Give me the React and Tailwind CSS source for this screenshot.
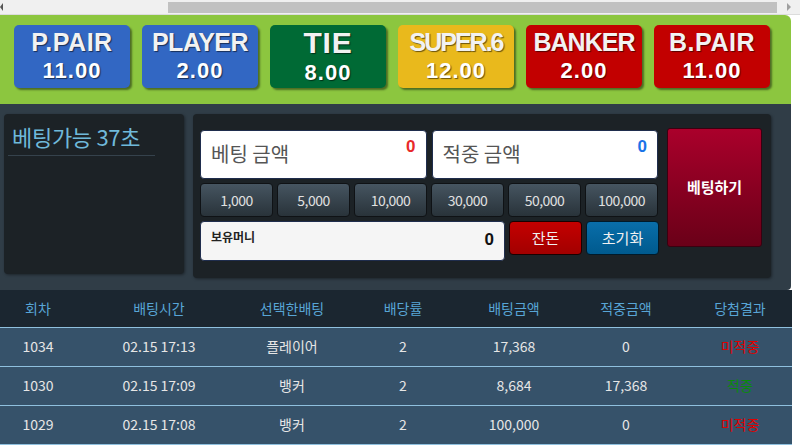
const odds = [
    { name: "P.PAIR", value: "11.00", bg: "bg-[#3267c3]", big: false, track: "tracking-[0.5px]" },
    { name: "PLAYER", value: "2.00", bg: "bg-[#3267c3]", big: false, track: "tracking-[-0.5px]" },
    { name: "TIE", value: "8.00", bg: "bg-[#006a35]", big: true, track: "tracking-wide" },
    { name: "SUPER.6", value: "12.00", bg: "bg-[#e9b91c]", big: false, track: "tracking-[-2px]" },
    { name: "BANKER", value: "2.00", bg: "bg-[#c20000]", big: false, track: "tracking-[-1px]" },
    { name: "B.PAIR", value: "11.00", bg: "bg-[#c20000]", big: false, track: "tracking-[0.5px]" },
];

const chips = ["1,000", "5,000", "10,000", "30,000", "50,000", "100,000"];

const history = [
    { round: "1034", time: "02.15 17:13", pick: "플레이어", rate: "2", bet: "17,368", win: "0", result: "미적중" },
    { round: "1030", time: "02.15 17:09", pick: "뱅커", rate: "2", bet: "8,684", win: "17,368", result: "적중" },
    { round: "1029", time: "02.15 17:08", pick: "뱅커", rate: "2", bet: "100,000", win: "0", result: "미적중" },
];

const kr = "font-['Noto_Sans_CJK_KR','Noto_Sans',sans-serif]";

function OddsButton({ item }) {

    return (

        <div className={`
            ${item.bg}
            w-[116px]
            h-[63px]
            rounded-[5px]
            flex
            flex-col
            items-center
            text-white
            font-bold
            font-['Liberation_Sans',Arial,sans-serif]
            shadow-[2px_2px_2px_rgba(0,0,0,0.45)]
            [text-shadow:1px_1px_1px_rgba(0,0,0,0.55)]
        `}>

            <div className={
                item.big
                    ? `text-[30px] leading-[30px] mt-[3px] text-[#f2f2f2] ${item.track}`
                    : `text-[25px] leading-[28px] mt-[3px] text-[#f2f2f2] ${item.track}`
            }>

                {item.name}

            </div>

            <div className="text-[22px] leading-[26px] mt-[2px] tracking-[1px]">

                {item.value}

            </div>

        </div>

    );

}

function AmountBox({ label, color }) {

    return (

        <div className="
            flex-1
            h-[49px]
            bg-white
            rounded-[4px]
            border
            border-[#1f2d4d]
            flex
            justify-between
            items-start
            px-[10px]
        ">

            <span className="text-[20px] leading-[28px] pt-[9px] text-[#555]">

                {label}

            </span>

            <span className={`text-[17px] leading-[20px] pt-[6px] font-bold ${color} font-['Liberation_Sans',sans-serif]`}>

                0

            </span>

        </div>

    );

}

export default function App() {

    return (

        <div className={`w-[800px] h-[448px] overflow-hidden bg-white ${kr}`}>

            {/* fake horizontal scrollbar */}
            <div className="h-[15px] bg-[#f0f0f0] border-b border-[#dcdcdc] flex items-center">

                <div className="w-[168px] h-full flex items-center">

                    <div className="w-0 h-0 border-y-[4px] border-y-transparent border-r-[3px] border-r-[#555]" />

                </div>

                <div className="w-[609px] h-[11px] bg-[#c1c1c1]" />

                <div className="flex-1 flex justify-center">

                    <div className="w-0 h-0 border-y-[4px] border-y-transparent border-l-[4px] border-l-[#a0a0a0]" />

                </div>

            </div>

            <div className="w-[791px]">

                <div className="
                    bg-[#8cc63f]
                    h-[89px]
                    rounded-tr-[6px]
                    flex
                    gap-[12px]
                    pl-[14px]
                    pt-[10px]
                ">

                    {odds.map((item) => (

                        <OddsButton key={item.name} item={item} />

                    ))}

                </div>

                <div className="bg-[#303d47] h-[186px] rounded-br-[4px] flex items-start pt-[10px] pl-[4px] gap-[9px]">

                    <div className="w-[180px] h-[160px] bg-[#1c2226] rounded-[4px] px-[4px] shadow-[1px_1px_3px_rgba(0,0,0,0.4)]">

                        <div className="text-[22px] leading-[30px] pt-[7px] pl-[4px] text-[#6fb9da] w-[147px] border-b border-[#35424c] pb-[4px] tracking-[-0.3px]">

                            베팅가능 37초

                        </div>

                    </div>

                    <div className="w-[578px] h-[164px] bg-[#1c2226] rounded-[4px] flex pl-[7px] pt-[16px] gap-[8px] shadow-[1px_1px_3px_rgba(0,0,0,0.4)]">

                        <div className="w-[459px] flex flex-col gap-[4px]">

                            <div className="flex gap-[5px] pr-[1px]">

                                <AmountBox label="베팅 금액" color="text-[#e82a2a]" />

                                <AmountBox label="적중 금액" color="text-[#1a73e8]" />

                            </div>

                            <div className="flex gap-[4px]">

                                {chips.map((chip) => (

                                    <button
                                        key={chip}
                                        className="
                                            w-[73px]
                                            h-[34px]
                                            rounded-[4px]
                                            border
                                            border-[#0f1215]
                                            bg-gradient-to-b
                                            from-[#465561]
                                            to-[#29333a]
                                            text-[14px]
                                            tracking-[-0.5px]
                                            text-[#e0e0e0]
                                        "
                                    >

                                        {chip}

                                    </button>

                                ))}

                            </div>

                            <div className="flex gap-[4px] items-start">

                                <div className="
                                    w-[305px]
                                    h-[40px]
                                    bg-[#f5f5f5]
                                    rounded-[4px]
                                    border
                                    border-[#1f2d4d]
                                    flex
                                    justify-between
                                    px-[10px]
                                ">

                                    <span className="text-[12px] font-bold leading-[16px] pt-[7px] text-[#222]">

                                        보유머니

                                    </span>

                                    <span className="text-[17px] font-bold leading-[20px] pt-[8px] text-[#111] font-['Liberation_Sans',sans-serif]">

                                        0

                                    </span>

                                </div>

                                <button className="w-[73px] h-[34px] rounded-[4px] border border-[#1a0000] bg-gradient-to-b from-[#c40000] to-[#a20000] text-[15px] text-[#f0f0f0]">

                                    잔돈

                                </button>

                                <button className="w-[73px] h-[34px] rounded-[4px] border border-[#001a2a] bg-gradient-to-b from-[#0a6eaa] to-[#005a8e] text-[15px] text-[#f0f0f0]">

                                    초기화

                                </button>

                            </div>

                        </div>

                        <button className="
                            w-[95px]
                            h-[119px]
                            -mt-[2px]
                            rounded-[3px]
                            border
                            border-[#3a0010]
                            bg-gradient-to-b
                            from-[#aa002b]
                            to-[#6a0018]
                            text-white
                            font-bold
                            text-[15px]
                        ">

                            베팅하기

                        </button>

                    </div>

                </div>

            </div>

            <table className="w-[792px] bg-[#36526a] text-[14px] text-center border-collapse table-fixed">

                <colgroup>

                    <col className="w-[76px]" />
                    <col className="w-[166px]" />
                    <col className="w-[100px]" />
                    <col className="w-[122px]" />
                    <col className="w-[100px]" />
                    <col className="w-[124px]" />
                    <col className="w-[104px]" />

                </colgroup>

                <thead>

                    <tr className="bg-[#1b2630] h-[37px] border-b border-[#8fc0de] text-[#58a5d6]">

                        <th className="font-normal">회차</th>
                        <th className="font-normal">배팅시간</th>
                        <th className="font-normal">선택한배팅</th>
                        <th className="font-normal">배당률</th>
                        <th className="font-normal">배팅금액</th>
                        <th className="font-normal">적중금액</th>
                        <th className="font-normal">당첨결과</th>

                    </tr>

                </thead>

                <tbody>

                    {history.map((row) => (

                        <tr key={row.round} className="h-[39px] border-b border-[#8fc0de] text-[#e6e6e6]">

                            <td>{row.round}</td>
                            <td>{row.time}</td>
                            <td>{row.pick}</td>
                            <td>{row.rate}</td>
                            <td>{row.bet}</td>
                            <td>{row.win}</td>
                            <td className={row.result === "적중" ? "text-[#0a8a0a]" : "text-[#e00000]"}>

                                {row.result}

                            </td>

                        </tr>

                    ))}

                </tbody>

            </table>

        </div>

    );

}
